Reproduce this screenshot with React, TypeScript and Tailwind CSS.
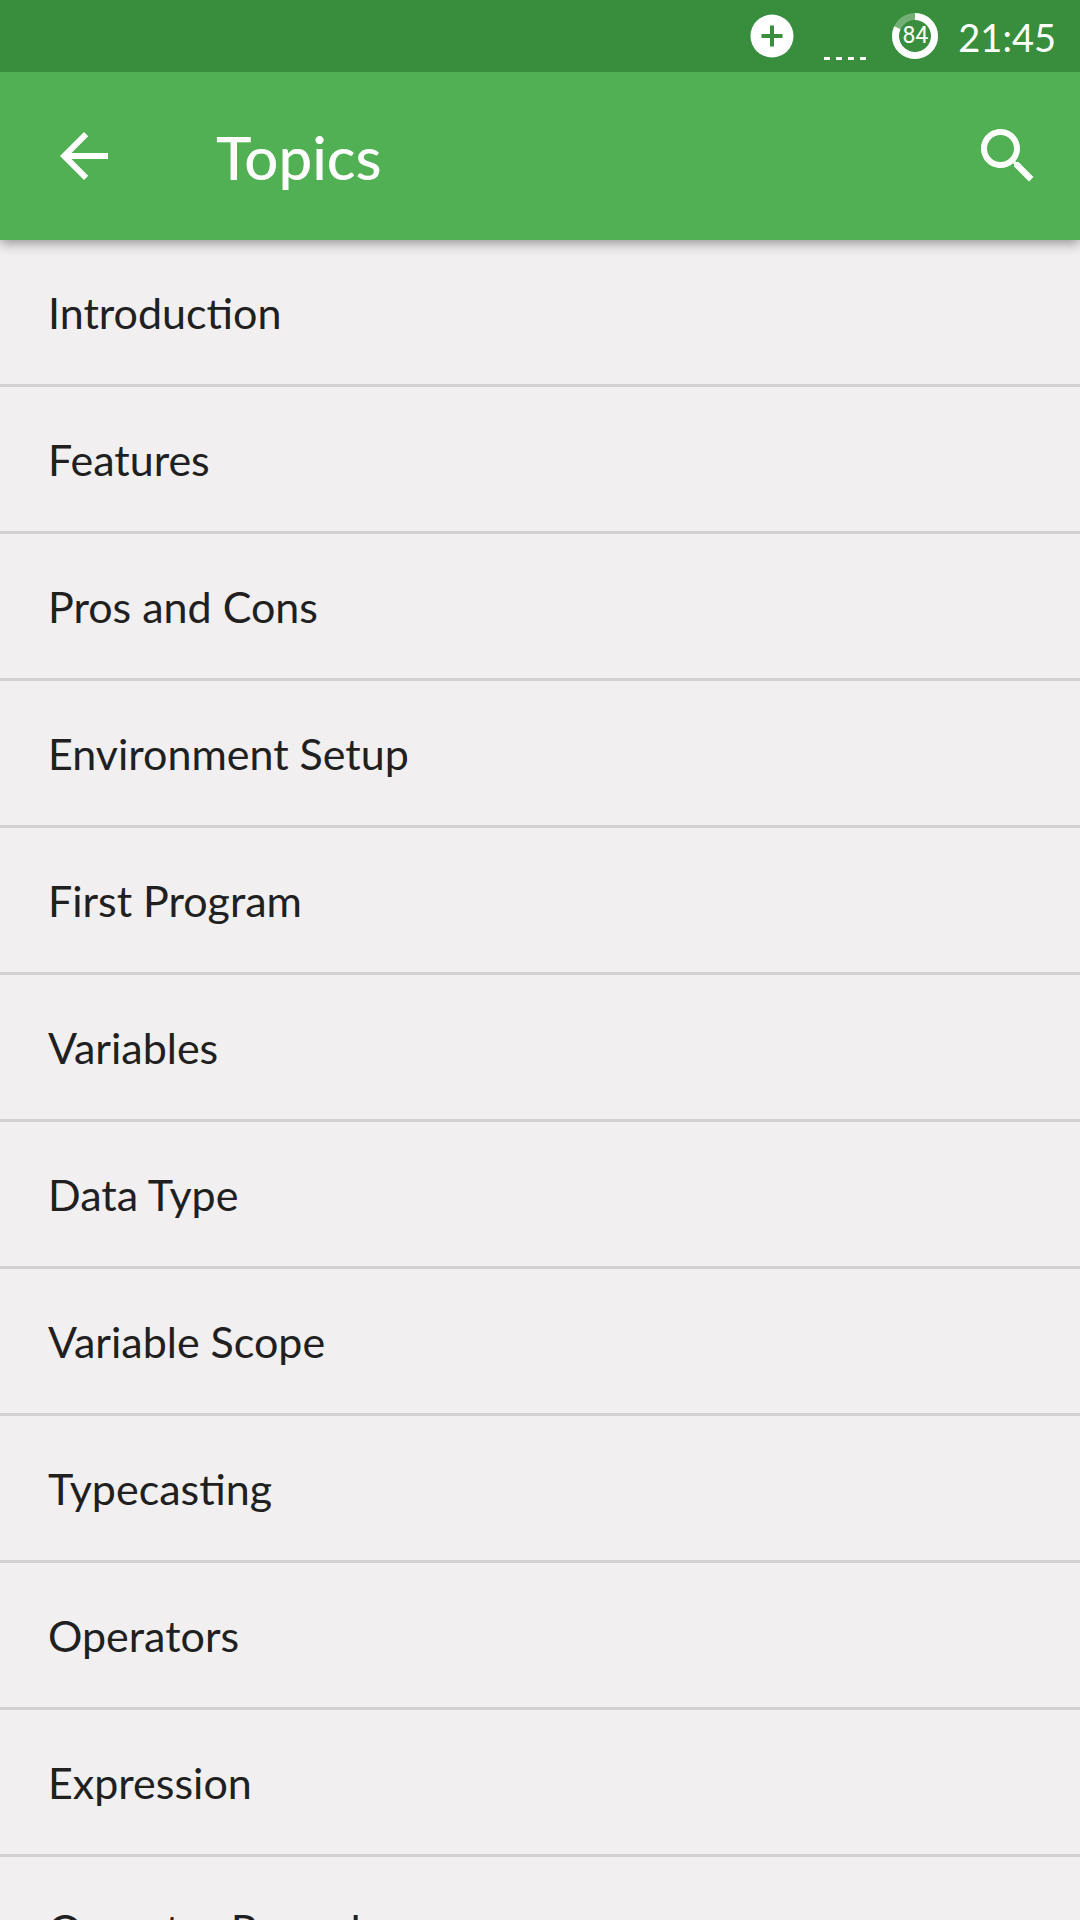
const topics = [
  "Introduction",
  "Features",
  "Pros and Cons",
  "Environment Setup",
  "First Program",
  "Variables",
  "Data Type",
  "Variable Scope",
  "Typecasting",
  "Operators",
  "Expression",
  "Operator Precedence",
];

const StatusBar = () => (
  <div className="relative z-20 flex h-18 shrink-0 items-center justify-end bg-[#388e3c] pr-6 text-white">
    <svg width="44" height="44" viewBox="0 0 44 44" aria-hidden="true">
      <circle cx="22" cy="22" r="21.5" fill="#fff" />
      <path d="M22 11.5v21M11.5 22h21" stroke="#388e3c" strokeWidth="4" />
    </svg>
    <svg className="ml-7" width="46" height="72" viewBox="0 0 46 72" aria-hidden="true">
      <path d="M2 58.5h42" stroke="#fff" strokeWidth="3" strokeDasharray="6 6" />
    </svg>
    <div className="relative ml-6 flex size-[46px] items-center justify-center">
      <svg className="absolute inset-0" width="46" height="46" viewBox="0 0 46 46" aria-hidden="true">
        <circle cx="23" cy="23" r="19.5" fill="none" stroke="#fff" strokeOpacity="0.3" strokeWidth="7" />
        <circle
          cx="23"
          cy="23"
          r="19.5"
          fill="none"
          stroke="#fff"
          strokeWidth="7"
          pathLength="100"
          strokeDasharray="82 100"
          transform="rotate(-90 23 23)"
        />
      </svg>
      <span className="font-['Roboto',sans-serif] text-[23px] leading-6">84</span>
    </div>
    <span className="ml-5 pt-0.5 text-[38px] leading-12">21:45</span>
  </div>
);

const AppBar = () => (
  <header className="relative z-10 flex h-42 shrink-0 items-center bg-[#50b053] pr-9 pl-12 text-white shadow-[0_3px_12px_rgba(0,0,0,0.4)]">
    <button type="button" aria-label="Back">
      <svg width="72" height="72" viewBox="0 0 24 24" fill="currentColor">
        <path d="M20 11H7.83l5.59-5.59L12 4l-8 8 8 8 1.41-1.41L7.83 13H20v-2z" />
      </svg>
    </button>
    <h1 className="ml-24 flex-1 pt-0.5 text-[60px] leading-18 font-medium">Topics</h1>
    <button type="button" aria-label="Search">
      <svg width="72" height="72" viewBox="0 0 24 24" fill="currentColor">
        <path d="M15.5 14h-.79l-.28-.27C15.41 12.59 16 11.11 16 9.5 16 5.91 13.09 3 9.5 3S3 5.91 3 9.5 5.91 16 9.5 16c1.61 0 3.09-.59 4.23-1.57l.27.28v.79l5 4.99L20.49 19l-4.99-5zm-6 0C7.01 14 5 11.99 5 9.5S7.01 5 9.5 5 14 7.01 14 9.5 11.99 14 9.5 14z" />
      </svg>
    </button>
  </header>
);

export default function App() {
  return (
    <div className="flex h-screen flex-col overflow-hidden bg-[#f1eff0] font-['Lato',sans-serif]">
      <StatusBar />
      <AppBar />
      <main className="min-h-0 flex-1 overflow-y-auto [scrollbar-width:none]">
        <ul>
          {topics.map((topic) => (
            <li key={topic} className="border-b-3 border-[#d3d1d2]">
              <a href="#" className="block px-12 pt-[45px] pb-[43px] text-[43px] leading-14 text-[#212021]">
                {topic}
              </a>
            </li>
          ))}
        </ul>
      </main>
    </div>
  );
}
